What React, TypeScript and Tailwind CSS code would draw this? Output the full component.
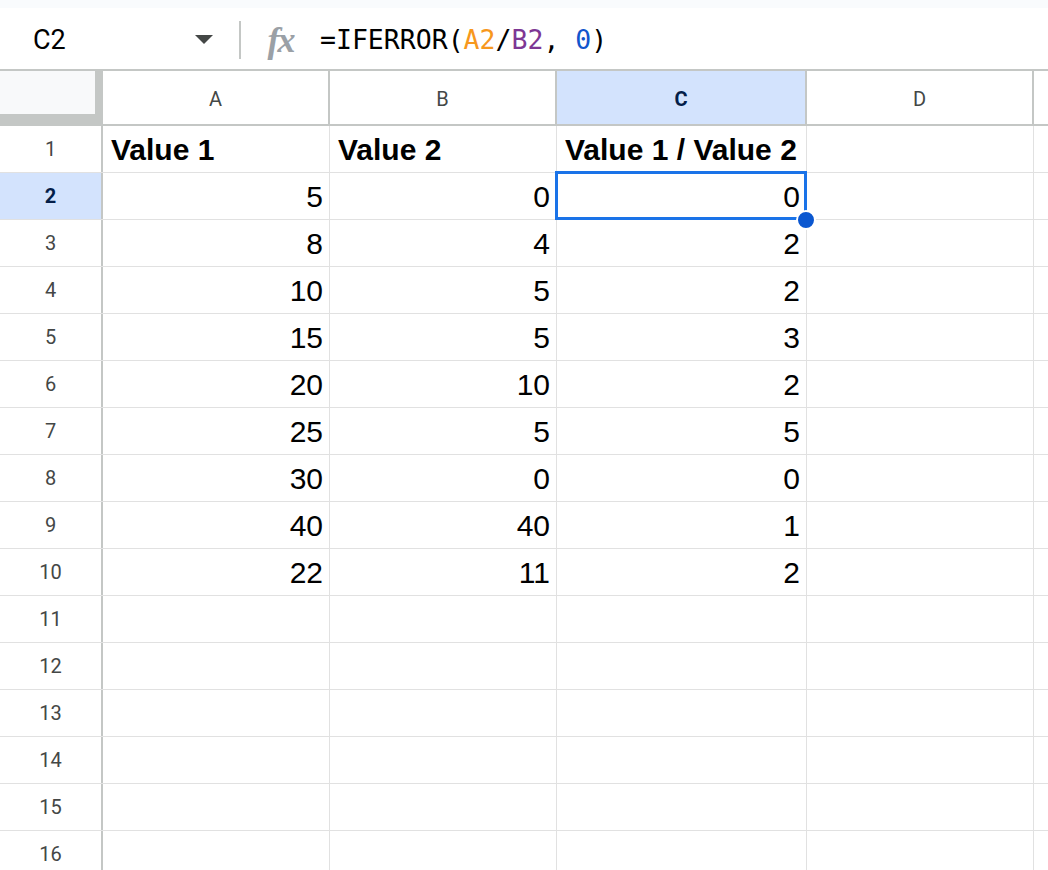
import React from 'react'

const rows: [string, string, string][] = [
  ['5', '0', '0'],
  ['8', '4', '2'],
  ['10', '5', '2'],
  ['15', '5', '3'],
  ['20', '10', '2'],
  ['25', '5', '5'],
  ['30', '0', '0'],
  ['40', '40', '1'],
  ['22', '11', '2'],
]

const colWidths = ['w-[227px]', 'w-[227px]', 'w-[250px]', 'w-[227px]']
const letters = ['A', 'B', 'C', 'D']

function RowHeader({ n, active }: { n: number; active?: boolean }) {
  return (
    <div
      className={`w-[103px] shrink-0 h-full flex items-center justify-center border-r-2 border-r-[#c4c7c5] text-[20px] font-['Roboto',sans-serif] ${
        active ? 'bg-[#d3e3fd] text-[#041e49] font-bold' : 'bg-white text-[#444746]'
      }`}
    >
      {n}
    </div>
  )
}

export default function App() {
  return (
    <div className="w-[1048px] h-[870px] overflow-hidden bg-white font-['Liberation_Sans',Arial,sans-serif]">
      <div className="h-[8px] bg-[#f9fbfd]" />

      {/* formula bar */}
      <div className="h-[63px] flex items-center border-b-2 border-b-[#c4c7c5] pt-[3px]">
        <div className="w-[239px] flex items-center justify-between pl-[33px] pr-[26px]">
          <span className="text-[27px] text-black font-['Roboto',sans-serif]">C2</span>
          <svg width="18" height="10" viewBox="0 0 18 10">
            <path d="M0 0 L18 0 L9 9 Z" fill="#444746" />
          </svg>
        </div>
        <div className="w-[2px] h-[38px] bg-[#c4c7c5]" />
        <div className="w-[79px] flex items-center justify-center">
          <span className="text-[36px] leading-none italic font-bold text-[#9aa0a6] font-['Liberation_Serif',serif] tracking-[-2px]">fx</span>
        </div>
        <div className="text-[26.5px] font-['DejaVu_Sans_Mono',monospace] text-black">
          =IFERROR(<span className="text-[#f7981d]">A2</span>/<span className="text-[#7e3794]">B2</span>, <span className="text-[#1155cc]">0</span>)
        </div>
      </div>

      {/* column header */}
      <div className="h-[55px] flex border-b-2 border-b-[#c4c7c5]">
        <div className="w-[103px] shrink-0 bg-[#c4c7c5]">
          <div className="w-[95px] h-[43px] bg-[#f8f9fa]" />
        </div>
        {letters.map((l, i) => (
          <div
            key={l}
            className={`${colWidths[i]} shrink-0 h-full flex items-center justify-center pt-[2px] border-r-2 border-r-[#c4c7c5] text-[20px] font-['Roboto',sans-serif] ${
              l === 'C' ? 'bg-[#d3e3fd] text-[#041e49] font-bold' : 'text-[#444746]'
            }`}
          >
            {l}
          </div>
        ))}
        <div className="flex-1" />
      </div>

      {/* header row 1 */}
      <div className="h-[47px] flex border-b border-b-[#e1e1e1]">
        <RowHeader n={1} />
        {['Value 1', 'Value 2', 'Value 1 / Value 2', ''].map((t, i) => (
          <div
            key={i}
            className={`${colWidths[i]} shrink-0 h-full flex items-center pl-[8px] border-r border-r-[#e1e1e1] text-[30px] font-bold text-black`}
          >
            {t}
          </div>
        ))}
      </div>

      {rows.map((r, ri) => {
        const n = ri + 2
        const selected = n === 2
        return (
          <div key={n} className="h-[47px] flex border-b border-b-[#e1e1e1]">
            <RowHeader n={n} active={selected} />
            {[...r, ''].map((t, i) => (
              <div
                key={i}
                className={`${colWidths[i]} shrink-0 h-full flex items-center justify-end pr-[6px] border-r border-r-[#e1e1e1] text-[30px] text-black ${
                  selected && i === 2 ? 'relative z-10' : ''
                }`}
              >
                {t}
                {selected && i === 2 && (
                  <>
                    <div className="absolute -left-[2px] -top-[2px] -right-[1px] -bottom-[1px] border-[3px] border-[#1a73e8] pointer-events-none" />
                    <div className="absolute -right-[10px] -bottom-[11px] w-[20px] h-[20px] rounded-full bg-[#0b57d0] border-2 border-white" />
                  </>
                )}
              </div>
            ))}
          </div>
        )
      })}

      {[11, 12, 13, 14, 15, 16].map((n) => (
        <div key={n} className="h-[47px] flex border-b border-b-[#e1e1e1]">
          <RowHeader n={n} />
          {colWidths.map((w, i) => (
            <div key={i} className={`${w} shrink-0 h-full border-r border-r-[#e1e1e1]`} />
          ))}
        </div>
      ))}
    </div>
  )
}
